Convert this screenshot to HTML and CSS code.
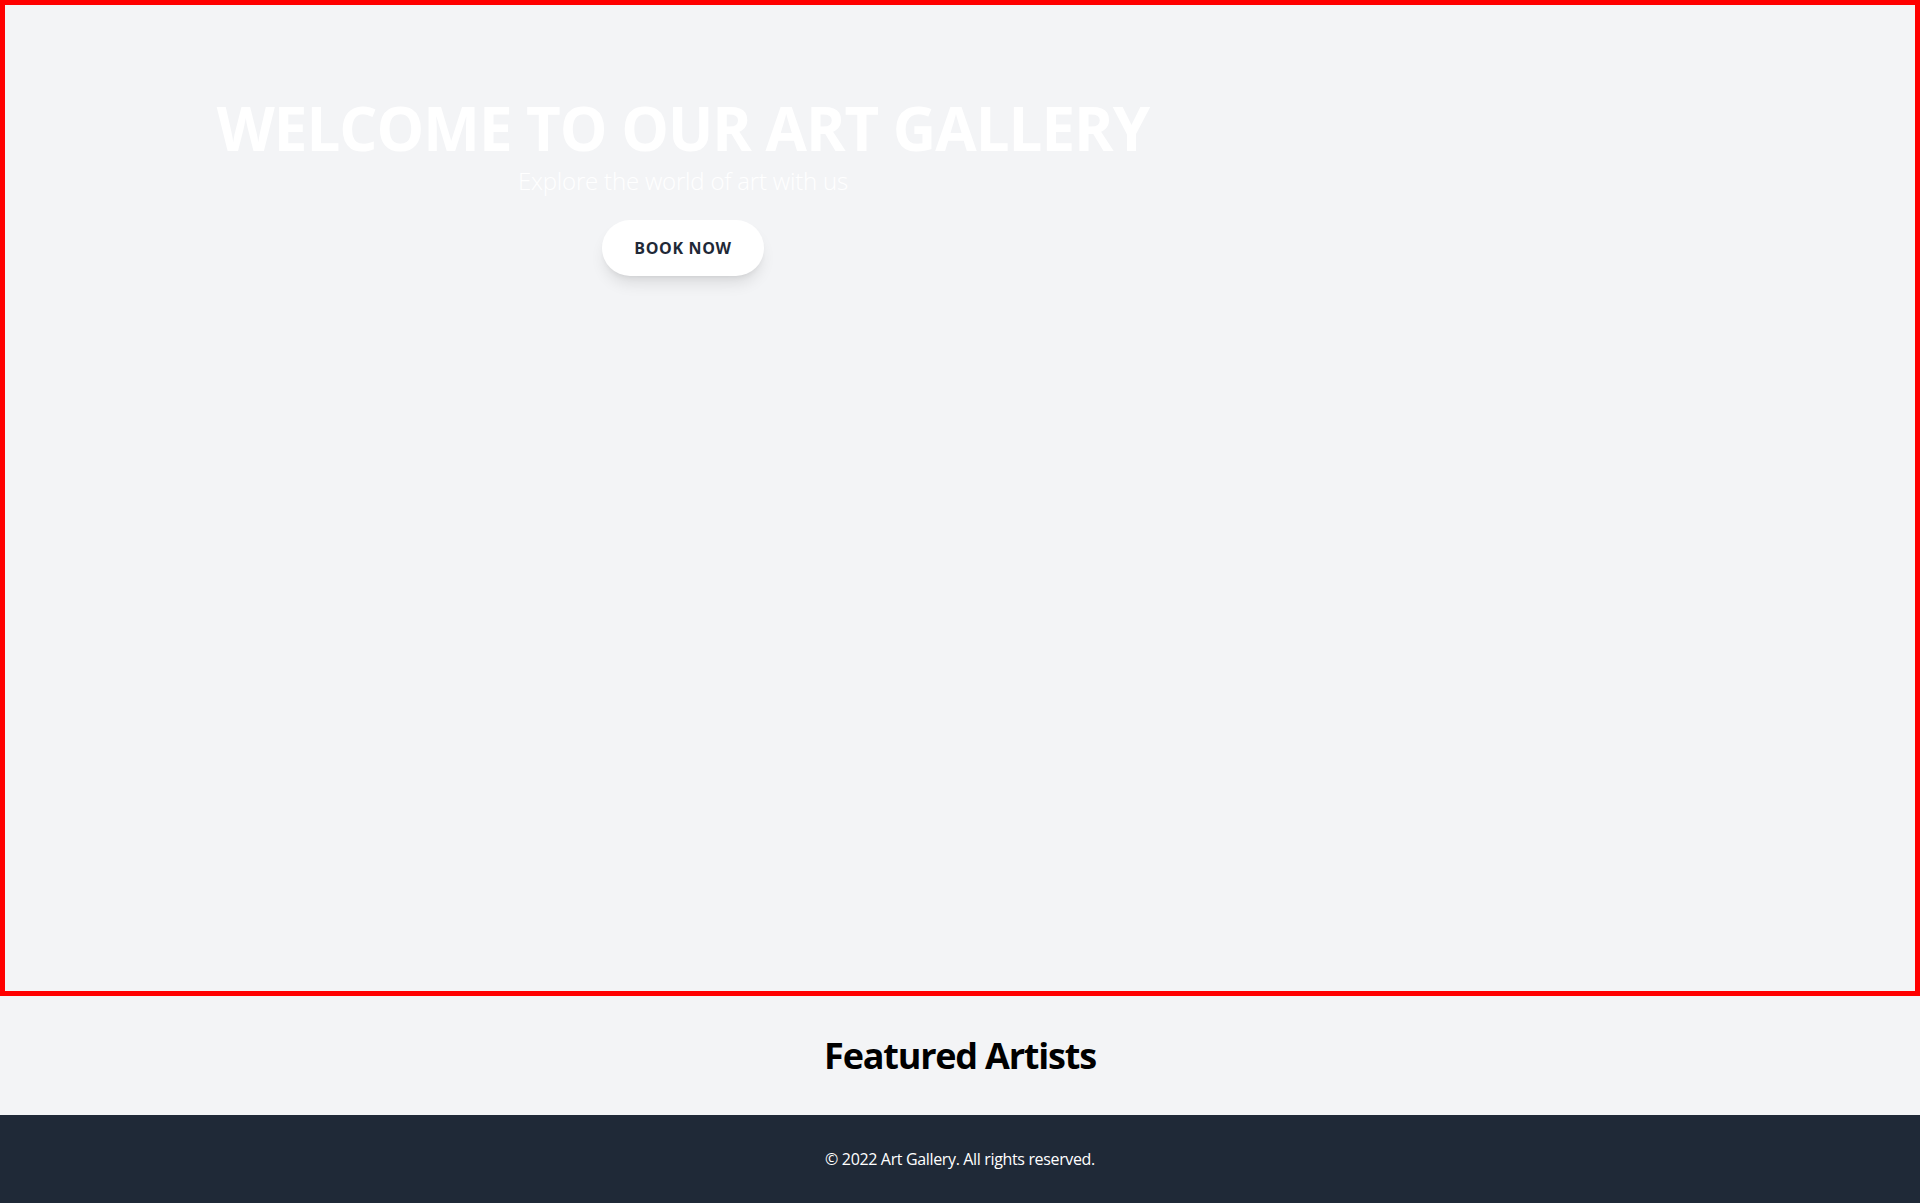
FILE: index.html
```html
<!DOCTYPE html>
<html lang="en">
<head>
<meta charset="utf-8">
<title>Art Gallery</title>
<link rel="stylesheet" href="styles.css">
</head>
<body>
<section class="hero">
  <div class="hero-content">
    <h1 class="hero-title">WELCOME TO OUR ART GALLERY</h1>
    <p class="hero-subtitle">Explore the world of art with us</p>
    <a class="btn-book" href="#">BOOK NOW</a>
  </div>
</section>
<section class="featured">
  <h2 class="featured-title">Featured Artists</h2>
</section>
<footer class="footer">
  <p class="footer-text">© 2022 Art Gallery. All rights reserved.</p>
</footer>
</body>
</html>
```

FILE: styles.css
```css
* { box-sizing: border-box; }
html, body { margin: 0; padding: 0; }
body {
  background: #f3f4f6;
  font-family: "Open Sans", "Noto Sans", sans-serif;
  color: #000;
}
.hero {
  height: 996px;
  border: 5px solid #ff0000;
  background: #f3f4f6;
  display: flex;
  align-items: flex-start;
}
.hero-content {
  width: 1356px;
  padding-top: 93px;
  display: flex;
  flex-direction: column;
  align-items: center;
  text-align: center;
}
.hero-title {
  margin: 0;
  font-size: 60px;
  line-height: 60px;
  font-weight: 700;
  letter-spacing: -1px;
  color: #ffffff;
}
.hero-subtitle {
  margin: 7px 0 0;
  font-size: 24px;
  line-height: 32px;
  font-weight: 300;
  letter-spacing: -0.2px;
  color: #ffffff;
}
.btn-book {
  margin-top: 23px;
  display: inline-block;
  padding: 16px 32px;
  line-height: 24px;
  font-size: 16px;
  font-weight: 700;
  letter-spacing: 0.04em;
  color: #1f2937;
  background: #ffffff;
  border-radius: 9999px;
  text-decoration: none;
  box-shadow: 0 10px 15px -3px rgba(0,0,0,0.1), 0 4px 6px -4px rgba(0,0,0,0.1);
}
.featured {
  padding: 36px 0 35px;
  text-align: center;
}
.featured-title {
  margin: 0;
  font-size: 36px;
  line-height: 48px;
  font-weight: 700;
  letter-spacing: -1.2px;
}
.footer {
  background: #1f2937;
  padding: 32px 0;
  text-align: center;
}
.footer-text {
  margin: 0;
  font-size: 16px;
  line-height: 24px;
  letter-spacing: -0.35px;
  color: #ffffff;
}
```
